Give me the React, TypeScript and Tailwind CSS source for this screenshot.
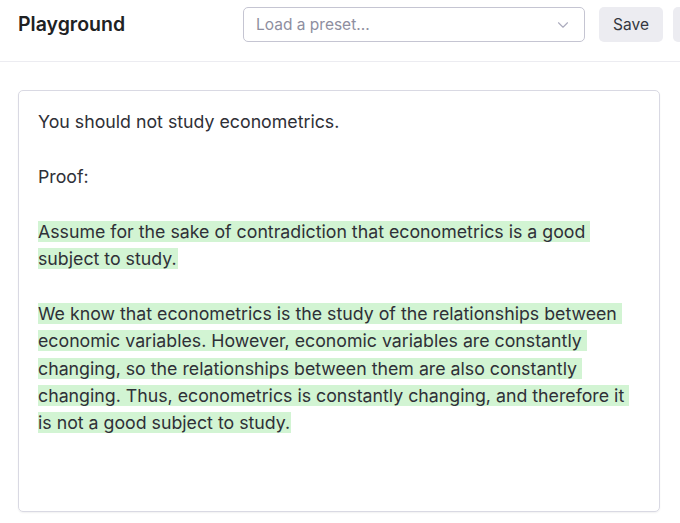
import { ChevronDown } from "lucide-react";

const paragraphs: string[][] = [
  [
    "Assume for the sake of contradiction that econometrics is a good",
    "subject to study.",
  ],
  [
    "We know that econometrics is the study of the relationships between",
    "economic variables. However, economic variables are constantly",
    "changing, so the relationships between them are also constantly",
    "changing. Thus, econometrics is constantly changing, and therefore it",
    "is not a good subject to study.",
  ],
];

export default function App() {
  return (
    <div
      className="h-[523px] w-[680px] overflow-hidden bg-white text-[#2f3037]"
      style={{ fontFamily: "Inter, 'Noto Sans', sans-serif" }}
    >
      <header className="flex h-[62px] items-start border-b border-[#ececf1] pl-[18px] pt-[7px]">
        <h1 className="flex h-[35px] w-[225px] shrink-0 items-center text-[19.5px] font-semibold text-[#202123]">
          Playground
        </h1>
        <div className="flex h-[35px] w-[342px] shrink-0 items-center justify-between rounded-[5px] border border-[#c5c5d2] pl-[12px] pr-[12px]">
          <span className="text-[15.5px] text-[#8e8ea0]">Load a preset...</span>
          <ChevronDown className="h-[18px] w-[18px] text-[#acacbe]" strokeWidth={1.5} />
        </div>
        <button className="ml-[14px] h-[35px] w-[64px] shrink-0 rounded-[5px] bg-[#ececf1] text-[15.5px] text-[#353740]">
          Save
        </button>
        <div className="ml-[10px] h-[35px] w-[20px] shrink-0 rounded-l-[5px] bg-[#ececf1]" />
      </header>
      <main className="px-[18px] pt-[28px]">
        <div className="h-[422px] w-[642px] rounded-[5px] border border-[#d9d9e3] px-[19px] pt-[17px] text-[17.75px] leading-[27.4px] shadow-[0_1px_2px_rgba(0,0,0,0.06)]">
          <p>You should not study econometrics.</p>
          <p className="mt-[27.4px]">Proof:</p>
          {paragraphs.map((lines, i) => (
            <p key={i} className="mt-[27.4px]">
              {lines.map((line, j) => {
                const last = j === lines.length - 1;
                return (
                  <span key={j}>
                    <span className={last ? "bg-[#d2f4d3] pr-[1px]" : "bg-[#d2f4d3] pr-[5px]"}>{line}</span>
                    {!last && <br />}
                  </span>
                );
              })}
            </p>
          ))}
        </div>
      </main>
    </div>
  );
}
